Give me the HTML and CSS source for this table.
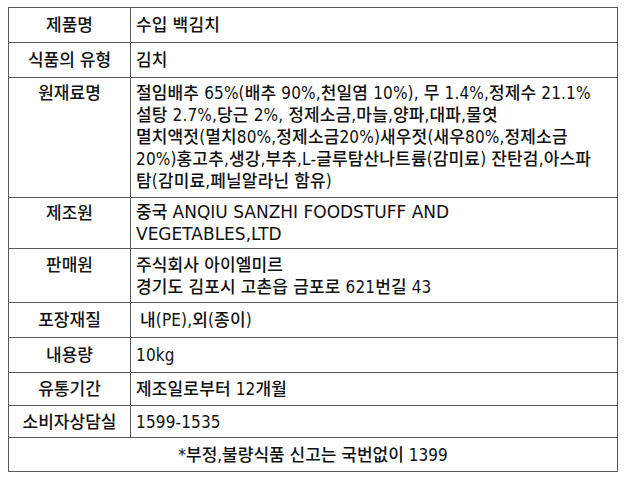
FILE: index.html
```html
<!DOCTYPE html>
<html lang="ko">
<head>
<meta charset="utf-8">
<title>제품 표시사항</title>
<link rel="stylesheet" href="styles.css">
</head>
<body>
<div class="label-table">
  <div class="cell head">제품명</div>
  <div class="cell body">수입 백김치</div>

  <div class="cell head">식품의 유형</div>
  <div class="cell body">김치</div>

  <div class="cell head top pad-ing">원재료명</div>
  <div class="cell body top pad-ing"><div>절임배추 65%(배추 90%,천일염 10%), 무 1.4%,정제수 21.1%<br>설탕 2.7%,당근 2%, 정제소금,마늘,양파,대파,물엿<br>멸치액젓(멸치80%,정제소금20%)새우젓(새우80%,정제소금<br>20%)홍고추,생강,부추,L-글루탐산나트륨(감미료) 잔탄검,아스파<br>탐(감미료,페닐알라닌 함유)</div></div>

  <div class="cell head top pad-maker">제조원</div>
  <div class="cell body"><div>중국 <span class="caps">ANQIU SANZHI FOODSTUFF AND</span><br><span class="caps">VEGETABLES,LTD</span></div></div>

  <div class="cell head top pad-seller">판매원</div>
  <div class="cell body"><div>주식회사 아이엘미르<br>경기도 김포시 고촌읍 금포로 621번길 43</div></div>

  <div class="cell head">포장재질</div>
  <div class="cell body"><span class="indent">내(PE),외(종이)</span></div>

  <div class="cell head">내용량</div>
  <div class="cell body">10kg</div>

  <div class="cell head">유통기간</div>
  <div class="cell body">제조일로부터 12개월</div>

  <div class="cell head">소비자상담실</div>
  <div class="cell body">1599-1535</div>

  <div class="cell foot">*부정,불량식품 신고는 국번없이 1399</div>
</div>
</body>
</html>
```

FILE: styles.css
```css
html, body {
  background: #ffffff;
}

body {
  margin: 7px 0 0 8px;
  font-family: "DejaVu Sans Condensed", "Noto Sans CJK KR", sans-serif;
  font-size: 17px;
  font-weight: 500;
  line-height: 22px;
  color: #111111;
}

.label-table {
  display: grid;
  grid-template-columns: 122px 487px;
  grid-template-rows: 35px 35px 120px 51px 54px 35px 35px 33px 32px 34px;
  width: 610px;
  border-top: 1px solid #5a5a5a;
  border-left: 1px solid #5a5a5a;
  box-sizing: border-box;
}

.cell {
  box-sizing: border-box;
  border-right: 1px solid #5a5a5a;
  border-bottom: 1px solid #5a5a5a;
  display: flex;
  align-items: center;
  white-space: nowrap;
  overflow: hidden;
}

.head {
  justify-content: center;
  text-align: center;
}

.body {
  padding-left: 5px;
  letter-spacing: 0.15px;
}

.caps {
  font-family: "DejaVu Sans", "Noto Sans CJK KR", sans-serif;
  font-size: 17px;
  letter-spacing: 0;
}

.top {
  align-items: flex-start;
}

.pad-ing {
  padding-top: 4px;
}

.pad-maker {
  padding-top: 4px;
}

.pad-seller {
  padding-top: 5px;
}

.indent {
  padding-left: 4px;
}

.foot {
  grid-column: 1 / 3;
  justify-content: center;
}
```
